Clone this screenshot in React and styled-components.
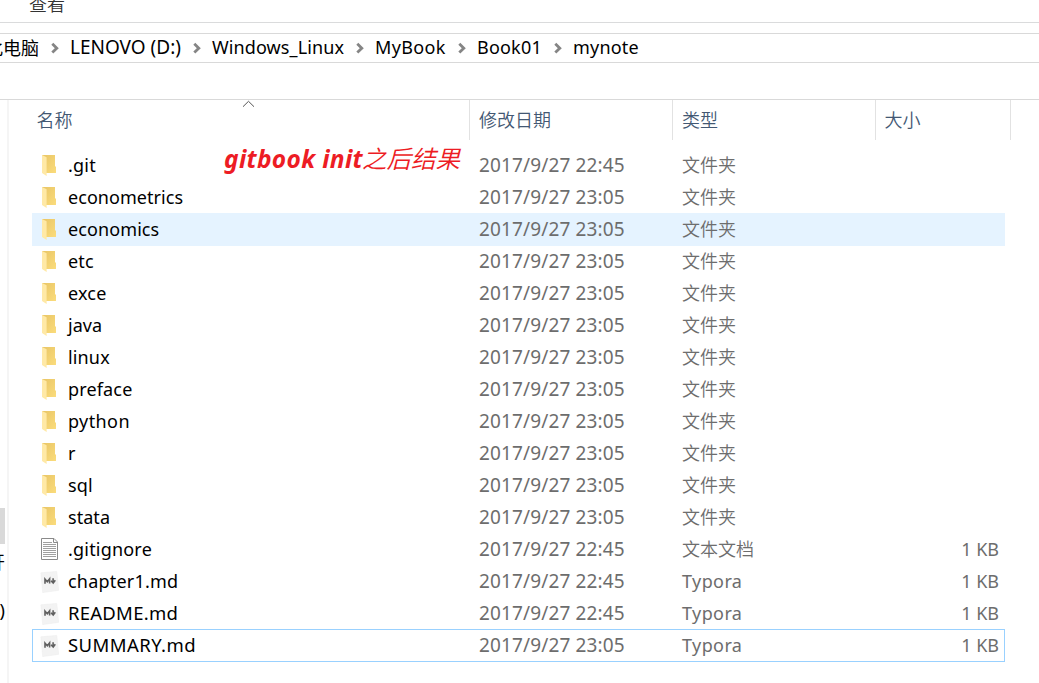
import React from "react";
import styled, { createGlobalStyle } from "styled-components";

const Global = createGlobalStyle`
  * { box-sizing: border-box; }
  html, body { margin: 0; background: #fff; overflow: hidden; }
  body { font-family: "Noto Sans", "Noto Sans CJK SC", sans-serif; font-size: 18px; color: #000; }
`;

const Window = styled.div`
  width: 1039px;
  height: 683px;
  display: flex;
  flex-direction: column;
  overflow: hidden;
  background: #fff;
`;

const Ribbon = styled.div`
  flex: none;
  height: 23px;
  padding-left: 29px;
  border-bottom: 1px solid #dadbdc;
  overflow: hidden;
`;

const RibbonTab = styled.div`
  height: 26px;
  line-height: 26px;
  margin-top: -10px;
  color: #333;
  font-family: "Noto Sans CJK SC", sans-serif;
  font-weight: 350;
`;

const AddressBar = styled.div`
  flex: none;
  display: grid;
  grid-template-columns: 85px 142px 163px 102px 96px 120px;
  height: 30px;
  margin-top: 10px;
  margin-left: -15px;
  border-top: 1px solid #d9d9d9;
  border-bottom: 1px solid #d9d9d9;
`;

const Crumb = styled.div`
  display: flex;
  align-items: center;
  justify-content: space-between;
  height: 28px;
  padding-right: 11px;
  line-height: 26px;
  white-space: nowrap;
  font-size: ${(p) => p.$size || 18}px;
  letter-spacing: ${(p) => p.$spacing || 0}px;

  > span {
    height: 28px;
  }
`;

const Main = styled.div`
  flex: 1;
  display: flex;
  min-height: 0;
  margin-top: 36px;
  border-top: 1px solid #d9d9d9;
`;

const NavPane = styled.div`
  flex: none;
  width: 9px;
  padding-top: 408px;
  border-right: 2px solid #f5f5f5;
  overflow: hidden;
`;

const NavThumb = styled.div`
  width: 5px;
  height: 36px;
  background: #d9d9d9;
`;

const NavLabel = styled.div`
  width: 5px;
  height: 24px;
  margin-top: ${(p) => p.$gap}px;
  line-height: 24px;
  display: flex;
  justify-content: flex-end;
  overflow: hidden;
  white-space: nowrap;
`;

const Files = styled.div`
  flex: 1;
  min-width: 0;
`;

const HeaderRow = styled.div`
  display: grid;
  grid-template-columns: 461px 203px 203px 135px;
  height: 40px;
`;

const HeaderCell = styled.div`
  position: relative;
  padding-left: ${(p) => p.$pad}px;
  border-right: 1px solid #e2e2e2;
  line-height: 38px;
  color: #435873;
  font-family: "Noto Sans CJK SC", sans-serif;
  font-weight: 350;
`;

const SortMark = styled.svg`
  position: absolute;
  left: 233px;
  top: 0;
`;

const List = styled.div`
  position: relative;
  width: 973px;
  margin: 9px 0 0 23px;
`;

const Row = styled.div`
  display: grid;
  grid-template-columns: 36px 411px 203px 203px 114px;
  height: 33px;
  margin-bottom: -1px;
  line-height: 32px;
  background: ${(p) => (p.$hover ? "#e5f3ff" : "transparent")};
  box-shadow: ${(p) => (p.$focused ? "inset 0 0 0 1px #99d1ff" : "none")};
`;

const IconCell = styled.div`
  padding: 4px 0 0 8px;
  height: 32px;
  line-height: 0;
`;

const Name = styled.div`
  font-size: ${(p) => p.$size || 18}px;
  letter-spacing: ${(p) => p.$spacing || 0}px;
  white-space: nowrap;
`;

const Detail = styled.div`
  color: #6d6d6d;
  white-space: nowrap;
  font-size: ${(p) => p.$size || 18}px;
  letter-spacing: ${(p) => p.$spacing || 0}px;
  text-align: ${(p) => (p.$right ? "right" : "left")};
`;

const Cjk = styled.span`
  font-family: "Noto Sans CJK SC", sans-serif;
  letter-spacing: 0;
`;

const KindCjk = styled(Cjk)`
  display: block;
  line-height: 30px;
  font-weight: 350;
`;

const Note = styled.div`
  position: absolute;
  left: 192px;
  top: -4px;
  display: flex;
  line-height: 28px;
  font-style: italic;
  white-space: nowrap;
  color: #ed1c24;
`;

const NoteLatin = styled.span`
  width: 138px;
  font-family: "Noto Sans", sans-serif;
  font-weight: 700;
  font-size: 24.5px;
  letter-spacing: 0.33px;
`;

const NoteCjk = styled.span`
  font-family: "Noto Sans CJK SC", sans-serif;
  font-weight: 350;
  font-size: 24.5px;
  line-height: 26px;
`;

const Chevron = () => (
  <svg width="8" height="12" viewBox="0 0 8 12">
    <path d="M1.3 1.8 5.8 6.2 1.3 10.6" fill="none" stroke="#858585" strokeWidth="2.8" />
  </svg>
);

const FolderIcon = () => (
  <svg width="18" height="24" viewBox="0 0 18 24">
    <defs>
      <linearGradient id="back" x1="0" x2="1" y1="0" y2="1">
        <stop offset="0" stopColor="#e8c566" />
        <stop offset="1" stopColor="#fbdc7c" />
      </linearGradient>
    </defs>
    <path d="M2 2H15V13L16 14V20H5Z" fill="url(#back)" />
    <path d="M2 2 6.6 4.2V23L2 20Z" fill="#ffe9a6" />
  </svg>
);

const TextIcon = () => (
  <svg width="20" height="24" viewBox="0 0 20 24">
    <path d="M1.5 1.5H14L17.5 5V22.5H1.5Z" fill="#fff" stroke="#8a8a8a" />
    <path d="M13.5 1.5V5.5H17.5" fill="none" stroke="#8a8a8a" />
    <path
      d="M3 5.5H12M3 7.5H16M3 9.5H16M3 11.5H16M3 13.5H16M3 15.5H16M3 17.5H16M3 19.5H16"
      stroke="#a0a0a0"
    />
  </svg>
);

const MarkdownIcon = () => (
  <svg width="20" height="24" viewBox="0 0 20 24">
    <g transform="translate(0 1)">
      <path d="M.8 2.8 16.8 1.4 18.7 20.4 2.7 22.6Z" fill="#f3f3f3" stroke="#ededed" strokeWidth=".5" />
      <path d="M5 13.8V9.2L7.3 11.8 9.6 8.8V13.4" fill="none" stroke="#606060" strokeWidth="1.6" />
      <path d="M13.1 8.2V12M11 10.7 13.2 13 15.3 10.3" fill="none" stroke="#606060" strokeWidth="1.6" />
    </g>
  </svg>
);

const icons = { folder: FolderIcon, text: TextIcon, md: MarkdownIcon };

const crumbs = [
  ["LENOVO (D:)", 19, 0],
  ["Windows_Linux", 18, 0.1],
  ["MyBook", 18, 0.35],
  ["Book01", 18, 0.2],
];

const files = [
  [".git", "folder", "22:45", 18, 0.2],
  ["econometrics", "folder", "23:05", 18, 0.05],
  ["economics", "folder", "23:05", 18, 0.1],
  ["etc", "folder", "23:05", 18, 0.2],
  ["exce", "folder", "23:05", 18, 0.2],
  ["java", "folder", "23:05", 18, 0],
  ["linux", "folder", "23:05", 18, 0.15],
  ["preface", "folder", "23:05", 18, 0.15],
  ["python", "folder", "23:05", 18, 0.4],
  ["r", "folder", "23:05", 18, 0],
  ["sql", "folder", "23:05", 18, 0.2],
  ["stata", "folder", "23:05", 18, 0.05],
  [".gitignore", "text", "22:45", 18, 0.2],
  ["chapter1.md", "md", "22:45", 18, 0.2],
  ["README.md", "md", "22:45", 18.5, 0.25],
  ["SUMMARY.md", "md", "23:05", 18.5, 0.45],
];

const FileRow = ({ file: [name, kind, time, size, spacing] }) => {
  const Icon = icons[kind];
  return (
    <Row $hover={name === "economics"} $focused={name === "SUMMARY.md"}>
      <IconCell><Icon /></IconCell>
      <Name $size={size} $spacing={spacing}>{name}</Name>
      <Detail $size={19} $spacing={0.13}>2017/9/27 {time}</Detail>
      <Detail $spacing={0.4}>
        {kind === "md" ? "Typora" : <KindCjk>{kind === "folder" ? "文件夹" : "文本文档"}</KindCjk>}
      </Detail>
      <Detail $right>{kind === "folder" ? "" : "1 KB"}</Detail>
    </Row>
  );
};

export default function App() {
  return (
    <Window>
      <Global />
      <Ribbon><RibbonTab>查看</RibbonTab></Ribbon>
      <AddressBar>
        <Crumb><Cjk>此电脑</Cjk><Chevron /></Crumb>
        {crumbs.map(([label, size, spacing]) => (
          <Crumb key={label} $size={size} $spacing={spacing}><span>{label}</span><Chevron /></Crumb>
        ))}
        <Crumb $spacing={0.2}><span>mynote</span></Crumb>
      </AddressBar>
      <Main>
        <NavPane>
          <NavThumb />
          <NavLabel $gap={5}><Cjk>开</Cjk></NavLabel>
          <NavLabel $gap={25}>)</NavLabel>
        </NavPane>
        <Files>
          <HeaderRow>
            <HeaderCell $pad={27.5}>
              名称
              <SortMark width="13" height="8" viewBox="0 0 13 8">
                <path d="M1 6.7 6.5 1.3 12 6.7" fill="none" stroke="#555" />
              </SortMark>
            </HeaderCell>
            <HeaderCell $pad={9}>修改日期</HeaderCell>
            <HeaderCell $pad={9}>类型</HeaderCell>
            <HeaderCell $pad={8.5}>大小</HeaderCell>
          </HeaderRow>
          <List>
            {files.map((file) => <FileRow key={file[0]} file={file} />)}
            <Note><NoteLatin>gitbook init</NoteLatin><NoteCjk>之后结果</NoteCjk></Note>
          </List>
        </Files>
      </Main>
    </Window>
  );
}
